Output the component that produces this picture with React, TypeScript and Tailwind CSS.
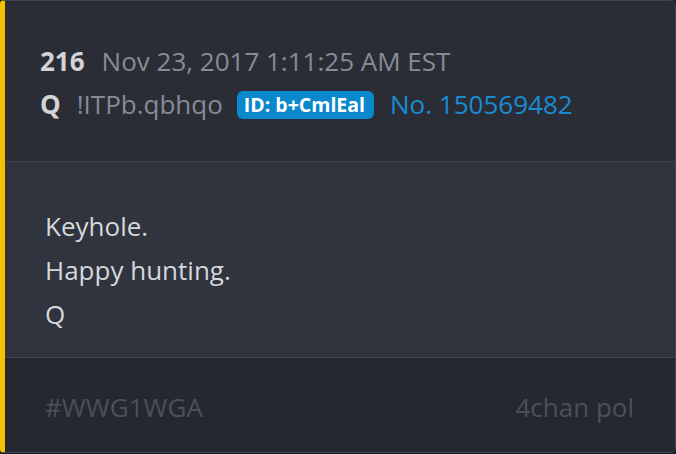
const font = { fontFamily: '"Open Sans", "Noto Sans", sans-serif' };

export default function App() {
  return (
    <div className="w-[676px] h-[454px] bg-[#1d2027]" style={font}>
      <div className="h-[453px] flex flex-col rounded-r-md rounded-l-sm overflow-hidden border border-[#3e434e] border-l-[5px] border-l-[#f6bf00]">
        {/* header */}
        <div className="h-[161px] shrink-0 bg-[#2a2d36] pl-[35px] pt-[39px] border-b border-[#3e434e]">
          <div className="flex items-baseline gap-[17px] text-[26px] leading-[43px]">
            <span className="font-bold text-[#d2d3d6]">216</span>
            <span className="text-[#868b97]">Nov 23, 2017 1:11:25 AM EST</span>
          </div>
          <div className="flex items-center text-[26px] leading-[43px]">
            <span className="font-bold text-[#d2d3d6]">Q</span>
            <span className="ml-[16px] text-[#868b97]">!ITPb.qbhqo</span>
            <span className="ml-[14px] rounded-md bg-[#0a88cc] pl-[7px] pr-[9px] text-[19.5px] font-bold leading-[28px] text-white">
              ID: b+CmlEal
            </span>
            <span className="ml-[16px] text-[#1a8bd1]">No. 150569482</span>
          </div>
        </div>
        {/* body */}
        <div className="h-[196px] shrink-0 bg-[#2f343e] pl-[40px] pt-[42px] border-b border-[#3e434e] text-[26px] leading-[44px] text-[#d6d7da]">
          <p>Keyhole.</p>
          <p>Happy hunting.</p>
          <p>Q</p>
        </div>
        {/* footer */}
        <div className="flex-1 bg-[#252830] flex items-center justify-between pl-[40px] pr-[41px] pt-[5px] text-[26px] text-[#4b505b]">
          <span>#WWG1WGA</span>
          <span>4chan pol</span>
        </div>
      </div>
    </div>
  );
}
